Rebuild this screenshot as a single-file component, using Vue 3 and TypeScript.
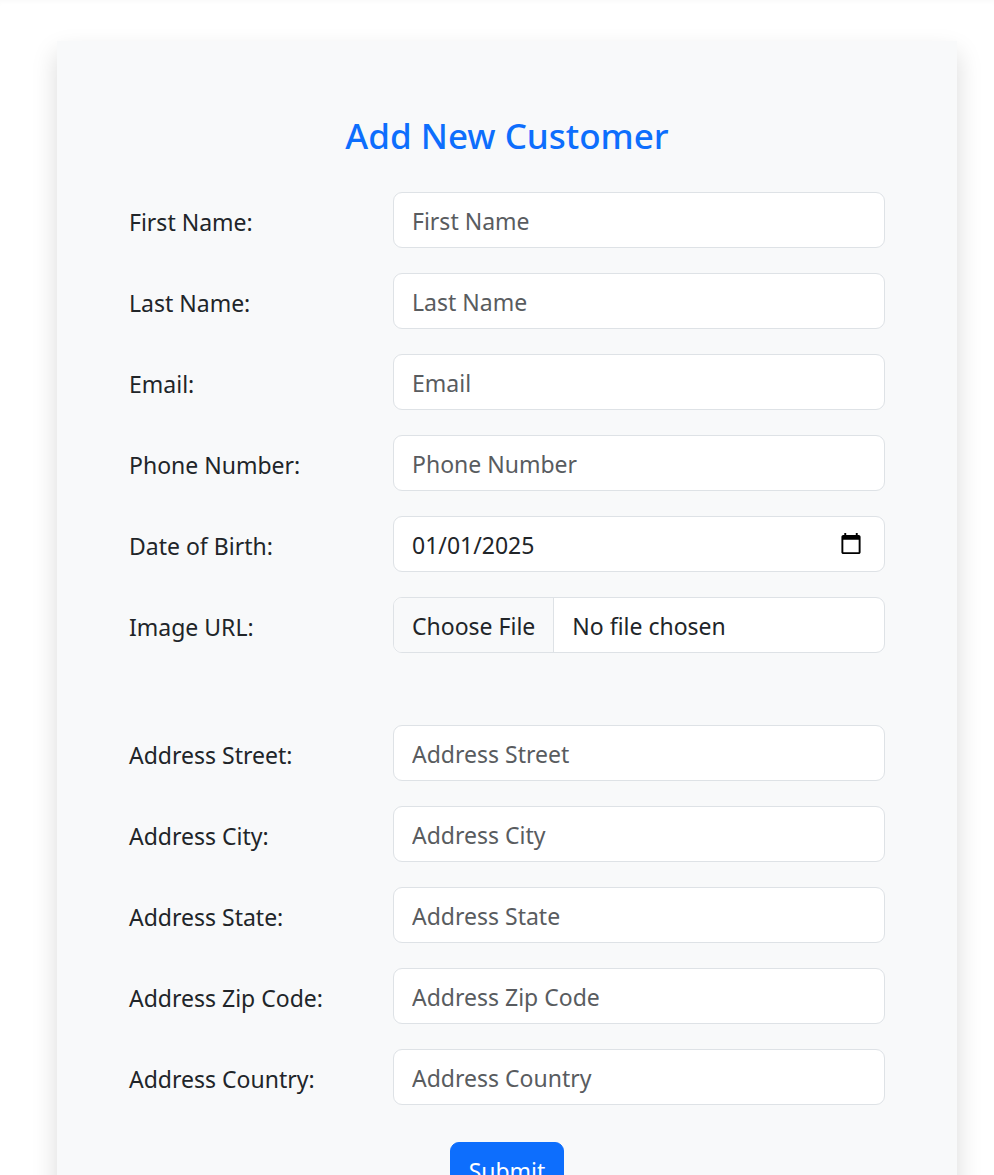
<script setup lang="ts">
import { reactive } from 'vue'

interface Field {
  id: string
  label: string
  type: 'text' | 'email' | 'tel'
}

const personal: Field[] = [
  { id: 'firstName', label: 'First Name', type: 'text' },
  { id: 'lastName', label: 'Last Name', type: 'text' },
  { id: 'email', label: 'Email', type: 'email' },
  { id: 'phoneNumber', label: 'Phone Number', type: 'tel' },
]

const address: Field[] = [
  { id: 'addressStreet', label: 'Address Street', type: 'text' },
  { id: 'addressCity', label: 'Address City', type: 'text' },
  { id: 'addressState', label: 'Address State', type: 'text' },
  { id: 'addressZipCode', label: 'Address Zip Code', type: 'text' },
  { id: 'addressCountry', label: 'Address Country', type: 'text' },
]

const customer = reactive<Record<string, string>>({ dateOfBirth: '2025-01-01' })
</script>

<template>
  <main class="page">
    <form class="card" @submit.prevent>
      <h2 class="title">Add New Customer</h2>
      <div class="group">
        <div v-for="field in personal" :key="field.id" class="row">
          <label class="label" :for="field.id">{{ field.label }}:</label>
          <input :id="field.id" v-model="customer[field.id]" class="control" :type="field.type" :placeholder="field.label" />
        </div>
        <div class="row">
          <label class="label" for="dateOfBirth">Date of Birth:</label>
          <input id="dateOfBirth" v-model="customer.dateOfBirth" class="control date" type="date" />
        </div>
        <div class="row">
          <label class="label" for="image">Image URL:</label>
          <input id="image" class="control file" type="file" accept="image/*" />
        </div>
      </div>
      <div class="group">
        <div v-for="field in address" :key="field.id" class="row">
          <label class="label" :for="field.id">{{ field.label }}:</label>
          <input :id="field.id" v-model="customer[field.id]" class="control" :type="field.type" :placeholder="field.label" />
        </div>
      </div>
      <button class="submit" type="submit">Submit</button>
    </form>
  </main>
</template>

<style>
body {
  margin: 0;
  background: #fff;
}
</style>

<style scoped>
.page {
  padding: 41px 37px 72px 57px;
  box-shadow: inset 0 4px 6px -4px rgba(0, 0, 0, 0.04);
  font-family: "Segoe UI", "Noto Sans", sans-serif;
  font-size: 23px;
  line-height: 36px;
  color: #212529;
}

.card {
  display: flex;
  flex-direction: column;
  padding: 72px;
  background: #f8f9fa;
  box-shadow: 0 12px 24px rgba(0, 0, 0, 0.15);
}

.title {
  margin: 0 0 33px;
  font-size: 35px;
  font-weight: 500;
  line-height: 46px;
  text-align: center;
  color: #0d6efd;
}

.group {
  display: flex;
  flex-direction: column;
  gap: 25px;
}

.group + .group {
  margin-top: 72px;
}

.row {
  display: grid;
  grid-template-columns: 264px minmax(0, 1fr);
}

.label {
  padding: 12px 0 8px;
}

.control {
  box-sizing: border-box;
  width: 100%;
  height: 56px;
  margin: 0;
  padding: 10px 18px 8px;
  border: 1px solid #dee2e6;
  border-radius: 9px;
  background: #fff;
  font: inherit;
  color: #212529;
}

.control::placeholder {
  color: #595c5f;
  opacity: 1;
}

.control:focus {
  outline: none;
  border-color: #86b7fe;
  box-shadow: 0 0 0 4px rgba(13, 110, 253, 0.25);
}

.date::-webkit-datetime-edit,
.date::-webkit-datetime-edit-fields-wrapper,
.date::-webkit-datetime-edit-month-field,
.date::-webkit-datetime-edit-day-field,
.date::-webkit-datetime-edit-year-field {
  padding: 0;
}

.date::-webkit-calendar-picker-indicator {
  width: 24px;
  height: 24px;
  margin-right: 3px;
  margin-bottom: 3px;
  padding: 0;
}

.file {
  overflow: hidden;
}

.file::file-selector-button {
  margin: -10px 18px -8px -18px;
  padding: 10px 18px 8px;
  border: 0 solid #dee2e6;
  border-right-width: 1px;
  background: #f8f9fa;
  font: inherit;
  color: #212529;
}

.submit {
  align-self: center;
  margin-top: 37px;
  padding: 10px 18px 8px;
  border: 1px solid #0d6efd;
  border-radius: 9px;
  background: #0d6efd;
  font: inherit;
  color: #fff;
  cursor: pointer;
}
</style>
